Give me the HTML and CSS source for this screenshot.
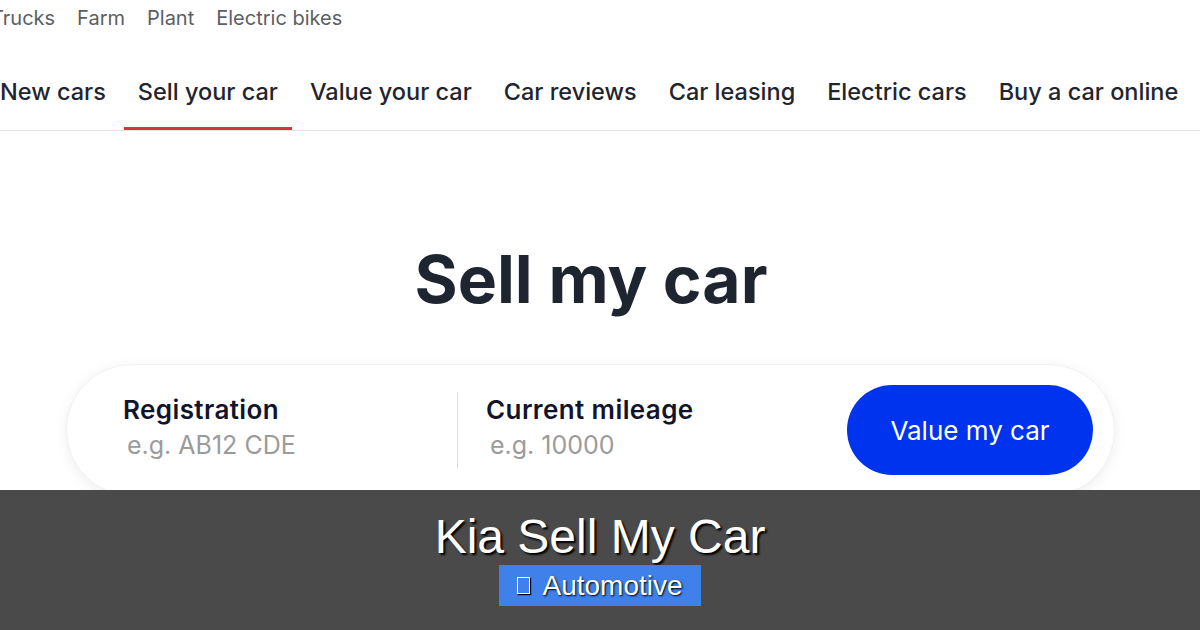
FILE: index.html
```html
<!DOCTYPE html>
<html lang="en">
<head>
    <meta charset="UTF-8">
    <title>Kia Sell My Car</title>
    <link rel="stylesheet" href="styles.css">
</head>
<body>
    <div class="page">
        <ul class="topbar">
            <li>Trucks</li>
            <li>Farm</li>
            <li>Plant</li>
            <li>Electric bikes</li>
        </ul>

        <nav class="mainnav">
            <a href="#">New cars</a>
            <a href="#" class="active">Sell your car</a>
            <a href="#">Value your car</a>
            <a href="#">Car reviews</a>
            <a href="#">Car leasing</a>
            <a href="#">Electric cars</a>
            <a href="#">Buy a car online</a>
        </nav>

        <h1 class="headline">Sell my car</h1>

        <form class="valuation">
            <div class="field first">
                <label for="reg">Registration</label>
                <input type="text" id="reg" placeholder="e.g. AB12 CDE">
            </div>
            <div class="divider"></div>
            <div class="field second">
                <label for="miles">Current mileage</label>
                <input type="text" id="miles" placeholder="e.g. 10000">
            </div>
            <button type="button" class="value-btn">Value my car</button>
        </form>
    </div>

    <div class="caption">
        <h2 class="caption-title">Kia Sell My Car</h2>
        <span class="tag"><span class="tofu"></span>Automotive</span>
    </div>
</body>
</html>
```

FILE: styles.css
```css
* {
    margin: 0;
    padding: 0;
    box-sizing: border-box;
}
html, body {
    width: 1200px;
    height: 630px;
    overflow: hidden;
}
body {
    font-family: Inter, "Noto Sans", sans-serif;
    background: #fff;
    color: #1f2530;
    position: relative;
}
.topbar {
    list-style: none;
    display: flex;
    gap: 22px;
    height: 36px;
    line-height: 36px;
    margin-left: -9px;
    font-size: 20px;
    color: #5b5e63;
}
.mainnav {
    display: flex;
    gap: 4px;
    margin-left: -14px;
    border-bottom: 1px solid #e3e3e3;
}
.mainnav a {
    display: block;
    padding: 41px 14px 20px;
    line-height: 30px;
    font-size: 23.5px;
    font-weight: 500;
    color: #1f2530;
    text-decoration: none;
    border-bottom: 3px solid transparent;
}
.mainnav a.active {
    border-bottom-color: #d9323a;
}
.headline {
    margin: 108px 18px 0 0;
    text-align: center;
    font-size: 66px;
    line-height: 80px;
    font-weight: 700;
    color: #1f2530;
}
.valuation {
    margin: 45px 0 0 66px;
    width: 1049px;
    height: 132px;
    padding: 21px 21px 21px 56px;
    display: flex;
    align-items: center;
    border-radius: 66px;
    border: 1px solid #f1f1f1;
    box-shadow: 0 3px 14px rgba(0, 0, 0, 0.07);
    background: #fff;
}
.field {
    display: flex;
    flex-direction: column;
}
.field.first {
    width: 334px;
}
.field.second {
    flex: 1;
    padding-left: 28px;
}
.field label {
    font-size: 26px;
    line-height: 30px;
    font-weight: 600;
    letter-spacing: 0.4px;
    color: #11142a;
}
.field input {
    border: none;
    outline: none;
    font-family: inherit;
    font-size: 25px;
    line-height: 40px;
    padding-left: 4px;
    width: 260px;
    background: transparent;
}
.field input::placeholder {
    color: #9b9b9b;
}
.divider {
    width: 1px;
    height: 76px;
    background: #dcdcdc;
}
.value-btn {
    width: 246px;
    height: 90px;
    border: none;
    border-radius: 45px;
    background: #0033ee;
    color: #fff;
    font-family: inherit;
    font-size: 26px;
    font-weight: 400;
}
.caption {
    position: absolute;
    left: 0;
    top: 490px;
    width: 1200px;
    height: 140px;
    background: #4a4a4a;
    display: flex;
    flex-direction: column;
    align-items: center;
    font-family: "Liberation Sans", Arial, sans-serif;
    color: #fff;
}
.caption-title {
    margin-top: 20px;
    font-size: 48px;
    line-height: 54px;
    font-weight: 400;
    text-shadow: 2px 2px 2px #000;
}
.tag {
    margin-top: 1px;
    height: 41px;
    width: 202px;
    display: flex;
    align-items: center;
    justify-content: center;
    gap: 12px;
    background: #3f80ea;
    font-size: 28px;
    text-shadow: 1px 1px 2px #000;
}
.tofu {
    width: 13px;
    height: 17px;
    border: 1px solid #fff;
    box-shadow: 1px 1px 1px #000;
}
```
